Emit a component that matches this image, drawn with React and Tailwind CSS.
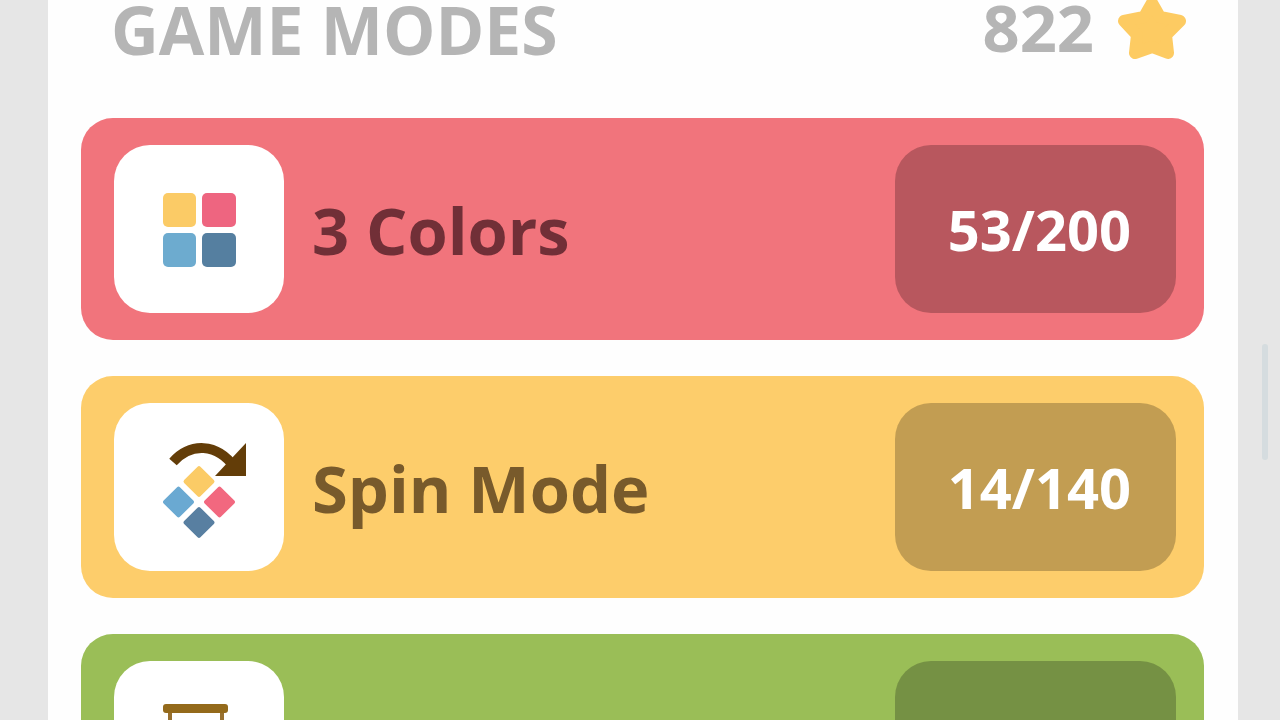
import clsx from 'clsx'

const modes = [
  {
    id: 'colors',
    name: '3 Colors',
    progress: '53/200',
    card: 'bg-[#f1747c]',
    text: 'text-[#712f37]',
    badge: 'bg-[#b8575e]',
    Icon: ColorsIcon,
  },
  {
    id: 'spin',
    name: 'Spin Mode',
    progress: '14/140',
    card: 'bg-[#fdcd6b]',
    text: 'text-[#785a2b]',
    badge: 'bg-[#c29d52]',
    Icon: SpinIcon,
  },
  {
    id: 'time',
    name: 'Time Attack',
    progress: '20/100',
    card: 'bg-[#9abe57]',
    text: 'text-[#4a5f26]',
    badge: 'bg-[#759144]',
    Icon: HourglassIcon,
  },
]

function ColorsIcon() {
  return (
    <svg viewBox="0 0 170 168" className="size-full" aria-hidden="true">
      <rect x="49" y="48" width="33" height="34" rx="5" fill="#fbcb66" />
      <rect x="88" y="48" width="34" height="34" rx="5" fill="#ee6580" />
      <rect x="49" y="88" width="33" height="34" rx="5" fill="#6dabcf" />
      <rect x="88" y="88" width="34" height="34" rx="5" fill="#557fa0" />
    </svg>
  )
}

function SpinIcon() {
  return (
    <svg viewBox="0 0 170 168" className="size-full" aria-hidden="true">
      <g transform="translate(85 99) rotate(45)">
        <rect x="-26" y="-26" width="23" height="23" rx="2" fill="#fbcb66" />
        <rect x="3" y="-26" width="23" height="23" rx="2" fill="#f2687f" />
        <rect x="-26" y="3" width="23" height="23" rx="2" fill="#6aa9d2" />
        <rect x="3" y="3" width="23" height="23" rx="2" fill="#587fa1" />
      </g>
      <path d="M59 59C76 40 103 39 121 65" fill="none" stroke="#633d08" strokeWidth="10" />
      <path d="M132 40V73H101Z" fill="#633d08" />
    </svg>
  )
}

function HourglassIcon() {
  return (
    <svg viewBox="0 0 170 168" className="size-full" aria-hidden="true">
      <path
        d="M56 48V62C56 76 78 78 78 85C78 92 56 94 56 108V122M108 48V62C108 76 88 78 88 85C88 92 108 94 108 108V122"
        fill="none"
        stroke="#98702f"
        strokeWidth="4"
      />
      <rect x="49" y="43" width="65" height="9" rx="3" fill="#946a1b" />
      <rect x="49" y="118" width="65" height="9" rx="3" fill="#946a1b" />
    </svg>
  )
}

function Star() {
  return (
    <svg viewBox="0 0 68 66" className="h-[66px] w-[68px]" aria-hidden="true">
      <path
        d="M34 7L42 21L62 25L48 39L50 57L34 51L17 57L19 39L6 25L26 21Z"
        fill="#fdcb62"
        stroke="#fdcb62"
        strokeWidth="12"
        strokeLinejoin="round"
      />
    </svg>
  )
}

function ModeCard({ mode }) {
  const { name, progress, card, text, badge, Icon } = mode
  return (
    <button
      type="button"
      className={clsx('flex w-full items-center rounded-[32px] py-[27px] pr-7 pl-[33px] text-left', card)}
    >
      <span className="h-[168px] w-[170px] shrink-0 rounded-[36px] bg-white">
        <Icon />
      </span>
      <span className={clsx('ml-7 flex-1 pt-0.5 text-[65px] leading-[64px] font-bold', text)}>{name}</span>
      <span
        className={clsx(
          'flex h-[168px] w-[281px] shrink-0 items-center justify-end rounded-[36px] pr-[45px] text-[56px] leading-[56px] font-bold text-white',
          badge
        )}
      >
        {progress}
      </span>
    </button>
  )
}

export default function App() {
  return (
    <div className="flex h-screen overflow-hidden bg-[#e6e6e6] font-['Open_Sans','Noto_Sans',sans-serif]">
      <main className="ml-12 flex-1 bg-[#fefefe] pr-[34px] pl-[33px]">
        <header className="flex h-[118px] items-start justify-between pr-[18px] pl-[30px] font-bold text-[#b5b5b5]">
          <h1 className="text-[66px] leading-[58px]">GAME MODES</h1>
          <div className="flex items-start gap-6">
            <span className="text-[65px] leading-[54px]">822</span>
            <div className="-mt-1">
              <Star />
            </div>
          </div>
        </header>
        <div className="flex flex-col gap-9">
          {modes.map(mode => (
            <ModeCard key={mode.id} mode={mode} />
          ))}
        </div>
      </main>
      <aside className="flex w-[42px] justify-end pt-[344px] pr-3">
        <div className="h-[116px] w-1.5 rounded-full bg-[#d5dcdf]" />
      </aside>
    </div>
  )
}
